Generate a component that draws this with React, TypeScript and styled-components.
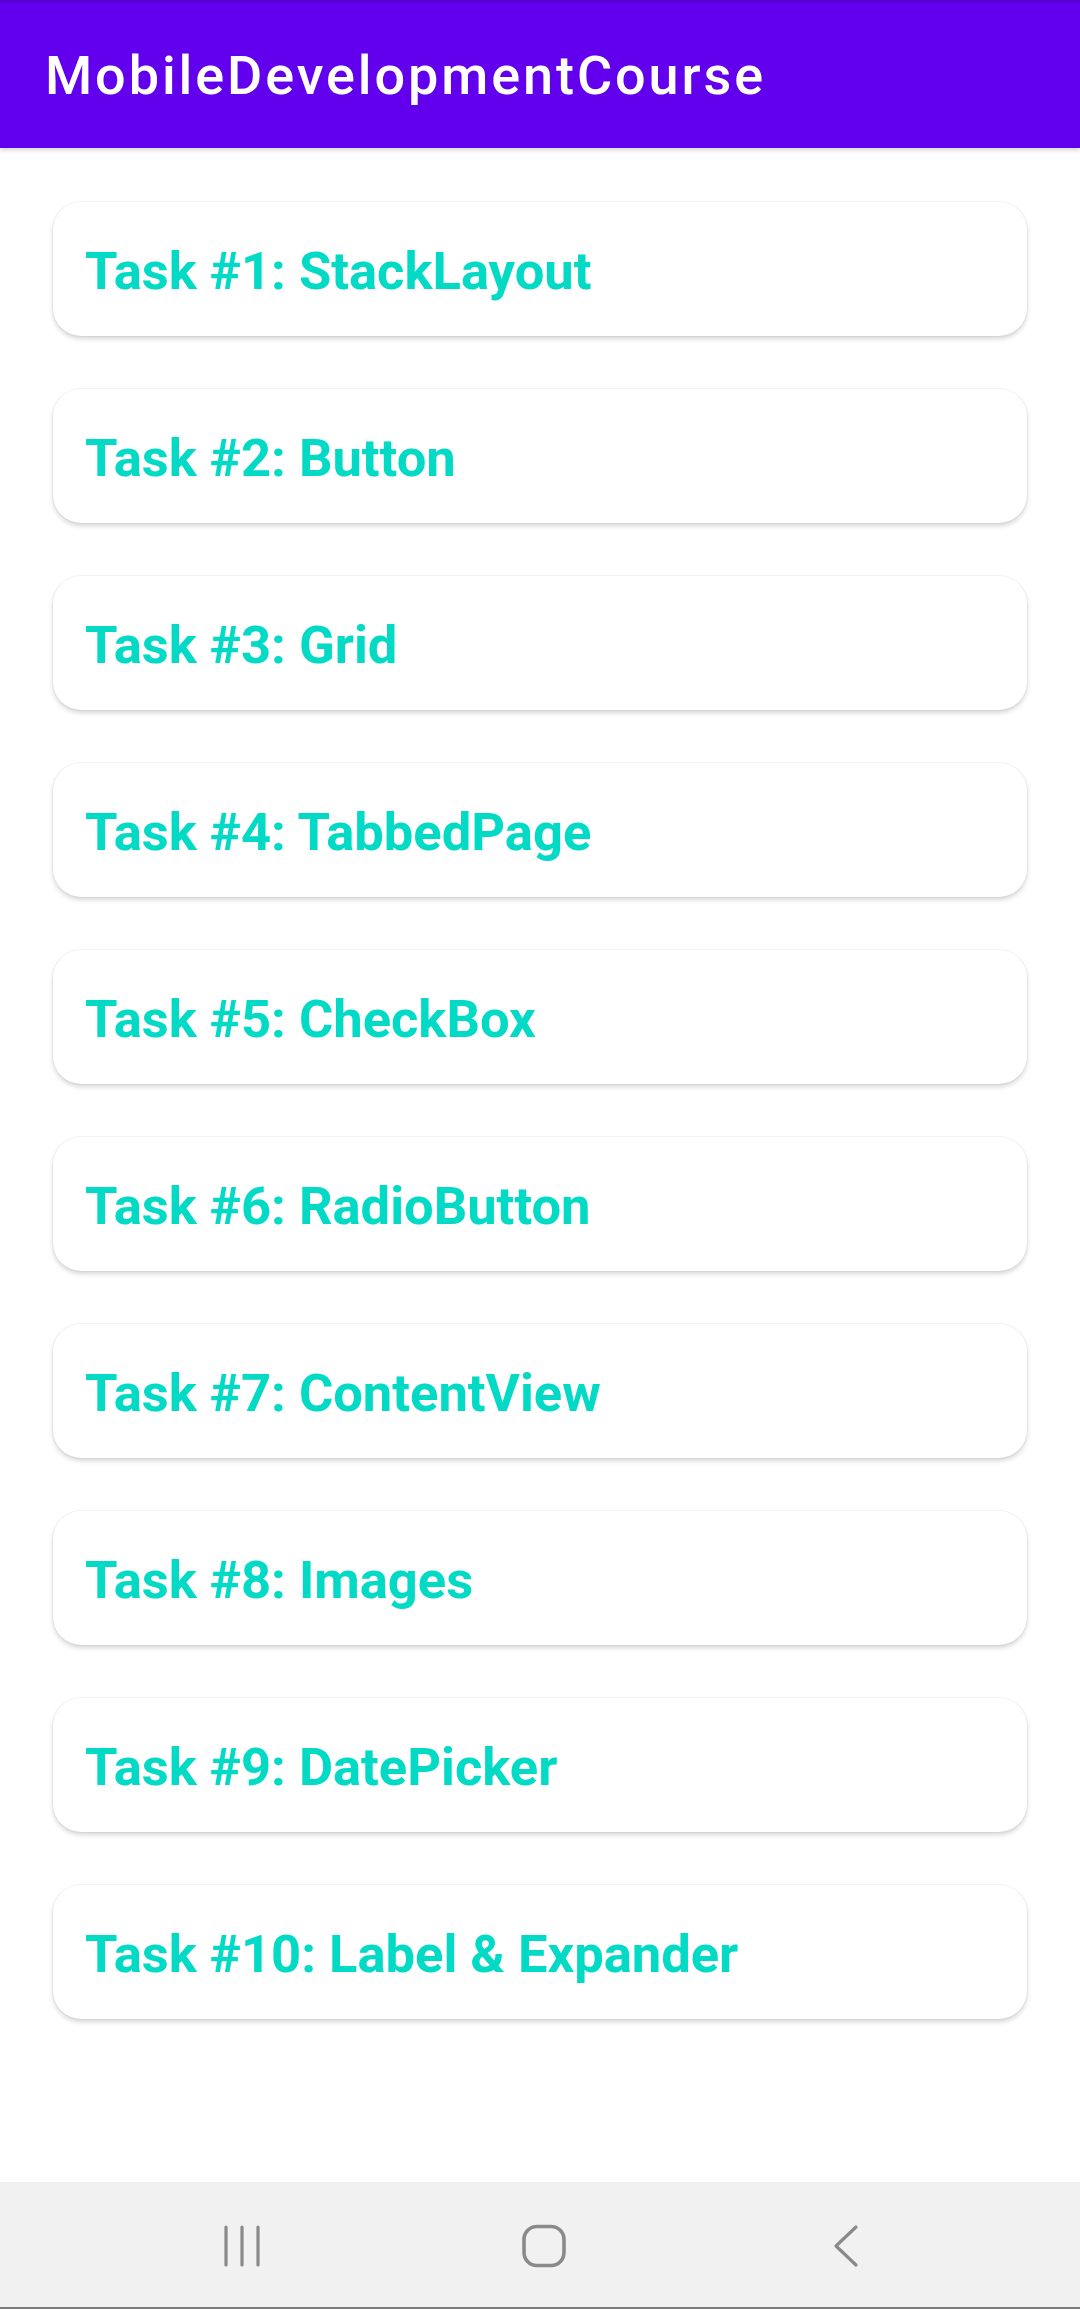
import React from "react";
import styled, { createGlobalStyle } from "styled-components";

const GlobalStyle = createGlobalStyle`
  html, body {
    margin: 0;
    padding: 0;
    background: #ffffff;
    font-family: Roboto, "Noto Sans", "Liberation Sans", sans-serif;
  }
  * { box-sizing: border-box; }
`;

const Screen = styled.div`
  width: 1080px;
  height: 2309px;
  display: flex;
  flex-direction: column;
  background: #ffffff;
  overflow: hidden;
`;

const AppBar = styled.header`
  position: relative;
  z-index: 2;
  height: 148px;
  flex: 0 0 148px;
  display: flex;
  align-items: center;
  padding: 2px 0 0 45px;
  background: linear-gradient(to bottom, #5200c8 0px, #6200ee 4px, #6200ee 100%);
  box-shadow: 0 2px 5px rgba(0, 0, 0, 0.18);
`;

const AppTitle = styled.h1`
  margin: 0;
  color: #ffffff;
  font-family: Roboto, "Noto Sans", sans-serif;
  font-weight: 500;
  font-size: 54px;
  letter-spacing: 2.9px;
`;

const TaskList = styled.main`
  flex: 1;
  display: flex;
  flex-direction: column;
  gap: 53px;
  padding: 54px 53px;
`;

const TaskCard = styled.div`
  height: 134px;
  display: flex;
  align-items: center;
  padding: 3px 0 0 32px;
  background: #ffffff;
  border-radius: 28px;
  box-shadow: 0 0 0 1px rgba(0, 0, 0, 0.035), 0 3px 5px rgba(0, 0, 0, 0.16);
`;

const TaskLabel = styled.span`
  color: #03dac5;
  font-family: Roboto, "Noto Sans", sans-serif;
  font-weight: 700;
  font-size: 52.5px;
`;

const NavBar = styled.nav`
  flex: 0 0 127px;
  height: 127px;
  display: flex;
  align-items: center;
  justify-content: center;
  gap: 242px;
  padding: 2px 0 0 8px;
  background: #f1f1f1;
  border-bottom: 2px solid #7a7a7a;
`;

const NavSlot = styled.div`
  width: 60px;
  height: 44px;
  display: flex;
  align-items: center;
  justify-content: center;
`;

const tasks = [
  "Task #1: StackLayout",
  "Task #2: Button",
  "Task #3: Grid",
  "Task #4: TabbedPage",
  "Task #5: CheckBox",
  "Task #6: RadioButton",
  "Task #7: ContentView",
  "Task #8: Images",
  "Task #9: DatePicker",
  "Task #10: Label & Expander",
];

const navColor = "#8a8a8a";

export default function App() {
  return (
    <>
      <GlobalStyle />
      <Screen>
        <AppBar>
          <AppTitle>MobileDevelopmentCourse</AppTitle>
        </AppBar>
        <TaskList>
          {tasks.map((t) => (
            <TaskCard key={t}>
              <TaskLabel>{t}</TaskLabel>
            </TaskCard>
          ))}
        </TaskList>
        <NavBar>
          <NavSlot>
            <svg width="40" height="44" viewBox="0 0 40 44">
              <g stroke={navColor} strokeWidth="3.2" strokeLinecap="round">
                <line x1="4" y1="3" x2="4" y2="41" />
                <line x1="20" y1="3" x2="20" y2="41" />
                <line x1="36" y1="3" x2="36" y2="41" />
              </g>
            </svg>
          </NavSlot>
          <NavSlot>
            <svg width="46" height="44" viewBox="0 0 46 44">
              <rect x="3" y="2.5" width="40" height="39" rx="13" fill="none" stroke={navColor} strokeWidth="3.6" />
            </svg>
          </NavSlot>
          <NavSlot>
            <svg width="28" height="44" viewBox="0 0 28 44">
              <polyline points="24,3 4,22 24,41" fill="none" stroke={navColor} strokeWidth="3.2" strokeLinecap="round" strokeLinejoin="round" />
            </svg>
          </NavSlot>
        </NavBar>
      </Screen>
    </>
  );
}
